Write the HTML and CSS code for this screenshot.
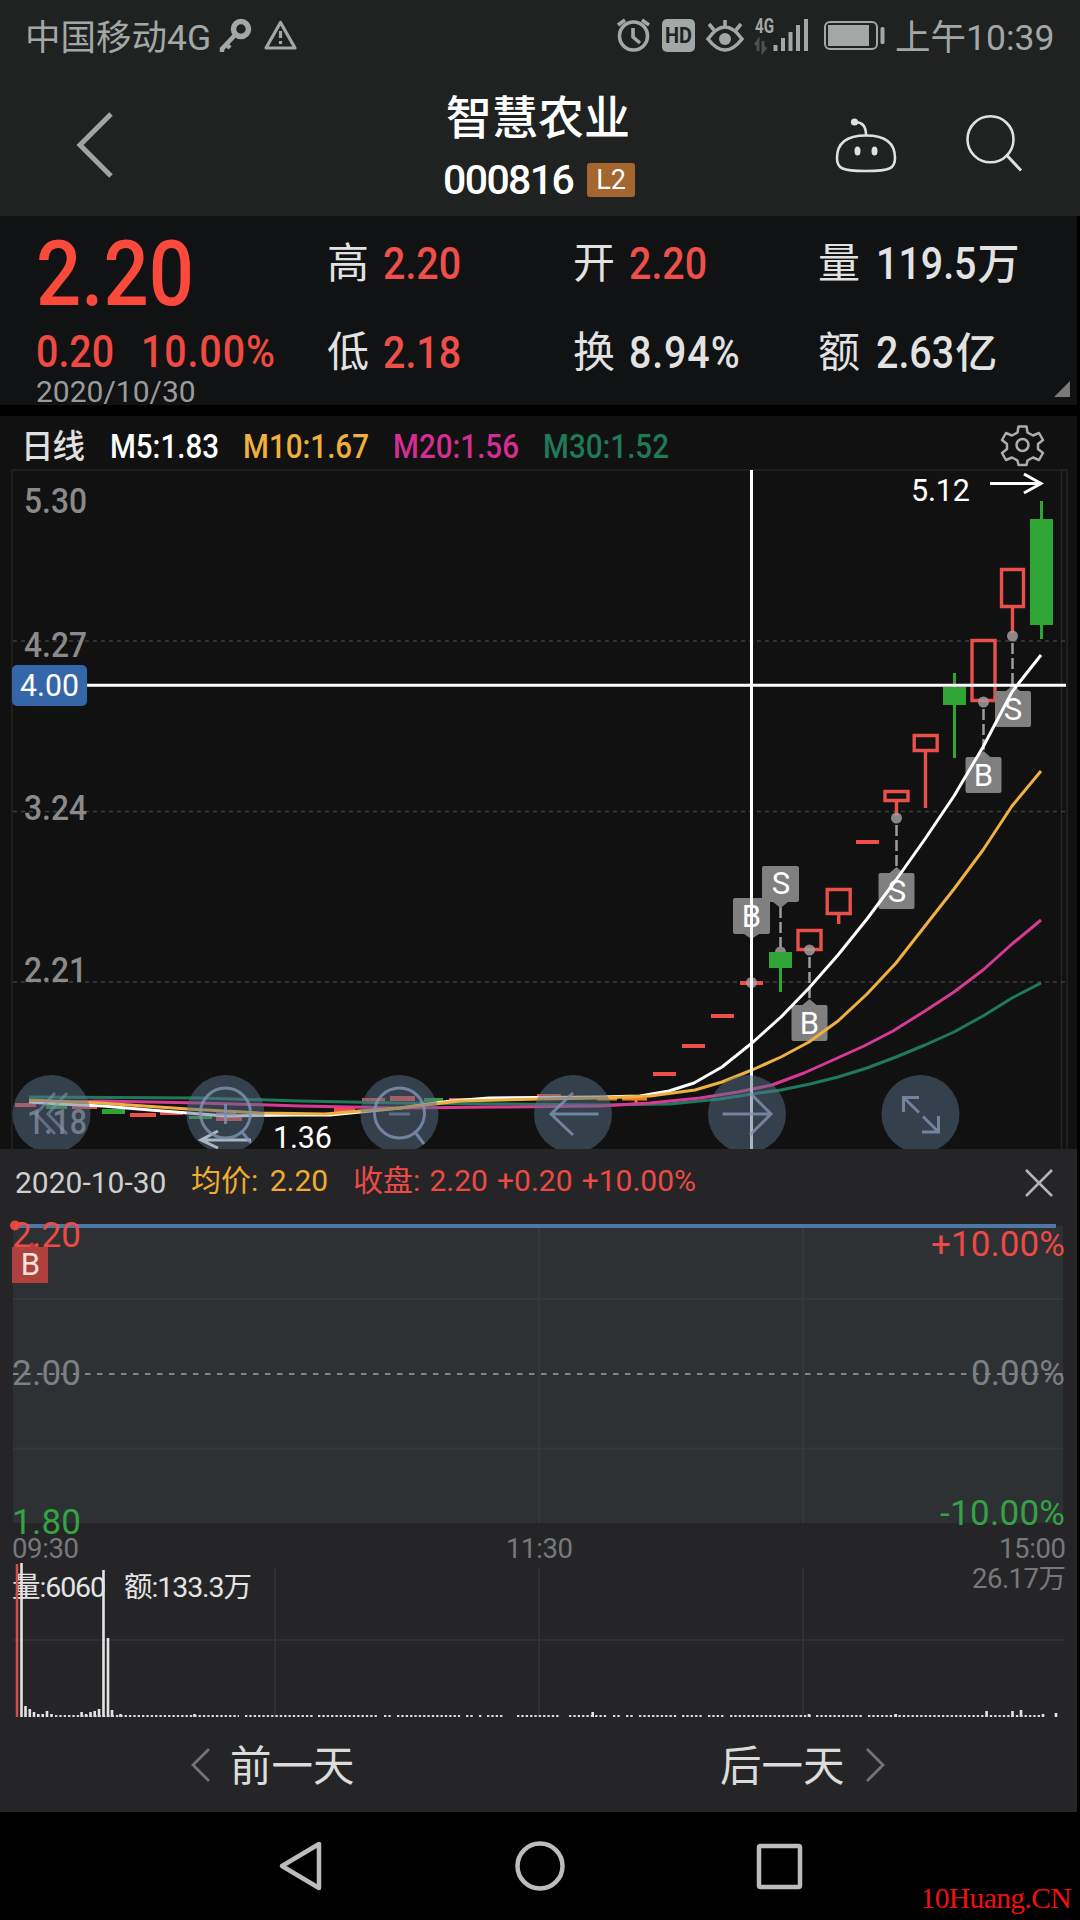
FILE: index.html
```html
<!DOCTYPE html>
<html lang="zh-CN">
  <head>
    <meta charset="UTF-8" />
    <meta name="viewport" content="width=device-width, initial-scale=1.0" />
    <title>智慧农业 000816</title>
    <link rel="stylesheet" href="styles.css">
  </head>
  <body>
    <div class="top">
      <div class="status-bar">
        <span class="carrier">中国移动4G</span>
        <svg class="status-left" width="80" height="40" viewBox="218 18 80 40">
          <circle cx="241" cy="30" r="7.5" fill="none" stroke="#a3a8a6" stroke-width="5.5"/>
          <path d="M235 36L222 50V53M227 46L230 49" fill="none" stroke="#a3a8a6" stroke-width="4.5"/>
          <path d="M280.5 23.500L295 49H266Z" fill="none" stroke="#a3a8a6" stroke-width="3.200" stroke-linejoin="round"/>
          <path d="M280.500 32v7M280.500 42v3" stroke="#a3a8a6" stroke-width="3.200"/>
        </svg>
        <svg class="status-icons" width="275" height="40" viewBox="612 18 275 40">
          <g fill="none" stroke="#a3a8a6" stroke-width="3.600">
            <circle cx="633.500" cy="37" r="14"/>
            <path d="M633 29v9l7 6M618 26l7-5M642 21l7 5"/>
            <path d="M708 40Q725 16 742 40Q725 62 708 40ZM725 28v-7M714 31l-5-6M736 31l5-6"/>
          </g>
          <circle cx="725" cy="40" r="6" fill="#a3a8a6"/>
          <rect x="662" y="20" width="33" height="33" rx="5" fill="#a3a8a6"/>
          <text x="665" y="44" class="hd" textLength="27" lengthAdjust="spacingAndGlyphs">HD</text>
          <text x="755" y="34" class="net" textLength="19" lengthAdjust="spacingAndGlyphs">4G</text>
          <path d="M758 52V42l-3 4M763 42v10l3-4" fill="none" stroke="#4c5150" stroke-width="3"/>
          <path d="M775.500 46v6M783 39v13M790.500 33v19M798 26v26M806 20v32" stroke="#a3a8a6" stroke-width="4"/>
          <rect x="825" y="23" width="52" height="27" rx="5" fill="none" stroke="#a3a8a6" stroke-width="2"/>
          <rect x="828" y="26" width="41" height="21" fill="#a3a8a6"/>
          <rect x="880.500" y="28" width="4" height="17" rx="1.500" fill="#a3a8a6"/>
        </svg>
        <span class="clock">上午10:39</span>
      </div>

      <header class="title-bar">
        <svg class="back" width="40" height="70" viewBox="0 0 40 70"><path d="M36 4L5 35l31 31" fill="none" stroke="#a2a4a3" stroke-width="5"/></svg>
        <div class="stock">
          <h1>智慧农业</h1>
          <div class="code"><span>000816</span><em>L2</em></div>
        </div>
        <svg class="tools" width="200" height="70" viewBox="830 110 200 70">
          <g fill="none" stroke="#dfe1e0" stroke-width="2.600">
            <path d="M837 158C837 142 848 135.500 866 135.500S895 142 895 158C895 168 891 171 866 171S837 168 837 158Z"/>
            <path d="M855 122Q866 122 866 135"/>
            <circle cx="990.500" cy="139.300" r="23"/>
            <path d="M1006 154.500l15 16" stroke-width="3"/>
          </g>
          <g fill="#dfe1e0">
            <circle cx="854.500" cy="122" r="3.600"/>
            <ellipse cx="857.500" cy="151" rx="3" ry="4.500"/>
            <ellipse cx="874.500" cy="151" rx="3" ry="4.500"/>
          </g>
        </svg>
      </header>
    </div>

    <section class="quote">
      <div class="last">
        <div class="price"><span class="num">2.20</span></div>
        <div class="change"><span class="num">0.20</span><span class="num long">10.00%</span></div>
        <div class="date">2020/10/30</div>
      </div>
      <dl class="stats">
        <div><dt>高</dt><dd class="num up">2.20</dd></div>
        <div><dt>开</dt><dd class="num up">2.20</dd></div>
        <div><dt>量</dt><dd><span class="num wide">119.5</span>万</dd></div>
        <div><dt>低</dt><dd class="num up">2.18</dd></div>
        <div><dt>换</dt><dd class="num long">8.94%</dd></div>
        <div><dt>额</dt><dd><span class="num wide short">2.63</span>亿</dd></div>
      </dl>
      <i class="corner"></i>
    </section>

    <!-- daily candles -->
    <section class="kline">
      <svg width="1080" height="733" viewBox="0 416 1080 733">
        <g class="ma">
          <text x="21" y="458" fill="#e0e0e0" textLength="64">日线</text>
          <text x="110" y="458" fill="#fff" textLength="109" lengthAdjust="spacingAndGlyphs">M5:1.83</text>
          <text x="243" y="458" fill="#efb03c" textLength="126" lengthAdjust="spacingAndGlyphs">M10:1.67</text>
          <text x="393" y="458" fill="#d32f93" textLength="126" lengthAdjust="spacingAndGlyphs">M20:1.56</text>
          <text x="543" y="458" fill="#1f7a58" textLength="126" lengthAdjust="spacingAndGlyphs">M30:1.52</text>
        </g>
        <g fill="none" stroke="#adadad" stroke-width="2.500" stroke-linejoin="round">
          <circle cx="1022.500" cy="445" r="6"/>
          <path d="M1018.500 426.500h8l1 6 5.500 3 6-2.500 4 7-5 4v5l5 4-4 7-6-2.500-5.500 3-1 4.500h-8l-1-4.500-5.500-3-6 2.500-4-7 5-4v-5l-5-4 4-7 6 2.500 5.500-3Z"/>
        </g>

        <path d="M12 1149V470H1067V1149M1061.500 470V1149" fill="none" stroke="#252525" stroke-width="1.500"/>
        <path d="M13 641H1066M13 811.500H1066M13 982H1066" stroke="#3e3e3e" stroke-width="1.500" stroke-dasharray="4 4"/>

        <g class="axis">
          <text x="24" y="513" textLength="63" lengthAdjust="spacingAndGlyphs">5.30</text>
          <text x="24" y="657" textLength="63" lengthAdjust="spacingAndGlyphs">4.27</text>
          <text x="24" y="820" textLength="63" lengthAdjust="spacingAndGlyphs">3.24</text>
          <text x="24" y="982" textLength="63" lengthAdjust="spacingAndGlyphs">2.21</text>
          <text x="27" y="1134" textLength="60" lengthAdjust="spacingAndGlyphs">1.18</text>
        </g>

        <g fill="#ee4f49">
          <path d="M15 1103h21v4h-21zM72 1105h25v4h-25zM130 1113h26v4h-26zM160 1111h23v4h-23zM216 1117h26v4h-26zM334 1108h21v4h-21zM362 1098h23v3h-23zM390 1096h25v5h-25zM449 1098h24v3h-24zM537 1094h24v3h-24z"/>
          <path d="M653 1072h23v4h-23zM682 1044h23v4h-23zM711 1014h23v4h-23zM740 981h23v4h-23zM856 840h23v4h-23z"/>
        </g>
        <path d="M46 1105h21v4h-21zM102 1109h23v5h-23zM189 1116h23v3h-23zM424 1098h19v4h-19z" fill="#2fa535"/>
        <path d="M597 1099h20M622 1099h25M636 1099v4" stroke="#f08028" stroke-width="3"/>

        <g fill="none" stroke="#e8504a" stroke-width="3.400">
          <path d="M798 930.500h23v19h-23zM827.200 889.500h23v24h-23zM838.700 914v10M885 791.500h23v9h-23zM896.500 802v14M914.200 735.500h23v15h-23zM925.500 752v56M972 640.500h23v60h-23zM1001.500 569.500h22v37h-22zM1012.500 608v25"/>
        </g>
        <g fill="#2fa535">
          <path d="M769 952h23v16h-23zM779 968h3v24h-3zM943 687h23v18h-23zM953 673h3v85h-3zM1030 519h23v106h-23zM1040 501h3v138h-3z"/>
        </g>

        <!-- trade markers -->
        <g fill="#a39a9c" opacity=".85">
          <circle cx="751.500" cy="982.500" r="5.500"/>
          <path d="M775 952a5.500 5.500 0 0 1 11 0z"/>
          <circle cx="809.500" cy="950" r="5.500"/>
          <circle cx="896.500" cy="818" r="5.500"/>
          <circle cx="983.500" cy="702" r="5.500"/>
          <circle cx="1012.500" cy="636" r="5.500"/>
        </g>
        <path d="M780.500 907v40M809.500 957v43M896.500 825v42M983.500 709v41M1012.500 643v42" stroke="#9d9d9d" stroke-width="2.500" stroke-dasharray="11 4"/>
        <g fill="#808080">
          <path d="M735 898h33q2 0 2 2v32q0 2-2 2h-9l-7.500 5-7.500-5h-9q-2 0-2-2v-32q0-2 2-2z"/>
          <path d="M764 866h33q2 0 2 2v32q0 2-2 2h-9l-7.500 6-7.500-6h-9q-2 0-2-2v-32q0-2 2-2z"/>
          <path d="M793.500 1005h9l7-6 7 6h9q2 0 2 2v32q0 2-2 2h-32q-2 0-2-2v-32q0-2 2-2z"/>
          <path d="M880.500 873h9l7-6 7 6h9q2 0 2 2v32q0 2-2 2h-32q-2 0-2-2v-32q0-2 2-2z"/>
          <path d="M967.500 757h9l7-6 7 6h9q2 0 2 2v32q0 2-2 2h-32q-2 0-2-2v-32q0-2 2-2z"/>
          <path d="M997 691h9l7-6 7 6h9q2 0 2 2v32q0 2-2 2h-32q-2 0-2-2v-32q0-2 2-2z"/>
        </g>
        <g class="flag">
          <text x="751.500" y="927">B</text>
          <text x="781" y="894">S</text>
          <text x="809.500" y="1034">B</text>
          <text x="897" y="902">S</text>
          <text x="983.500" y="786">B</text>
          <text x="1013" y="720">S</text>
        </g>

        <!-- moving averages -->
        <g fill="none" stroke-width="3" stroke-linejoin="round">
          <path stroke="#1f7a5c" d="M29 1097L200 1098 300 1101 400 1103 500 1104 600 1105 670 1104 720 1099 752 1094 781 1090 810 1084 838 1077 867 1068 896 1057 925 1045 954 1032 983 1016 1012 998 1041 983"/>
          <path stroke="#d63a93" d="M29 1103L100 1101 200 1103 300 1106 400 1108 500 1107 600 1106 650 1103 700 1098 738 1092 772 1085 804 1073 833 1060 864 1046 893 1031 925 1011 954 992 983 970 1012 944 1041 920"/>
          <path stroke="#fff" d="M29 1102L60 1104 103 1106 150 1110 188 1113 225 1116 293 1115 330 1115 400 1108 451 1101 489 1098 600 1097 640 1096 669 1091 694 1083 722 1067 752 1043 781 1017 809 988 838 955 867 919 896 880 925 839 954 796 983 747 1012 692 1022 679 1041 655"/>
          <path stroke="#f0b040" d="M29 1100L100 1103 188 1109 260 1113 325 1114 360 1111 400 1108 460 1101 540 1099 600 1098 650 1096 695 1090 722 1082 752 1070 781 1057 809 1042 838 1021 867 994 896 963 925 926 954 889 983 850 1012 806 1041 771"/>
        </g>

        <path d="M751.500 470V1149M87 685.300H1066" stroke="#fff" stroke-width="3"/>
        <rect x="12" y="665" width="75" height="41" rx="5" fill="#3567a8"/>
        <text class="cursor" x="20" y="696" textLength="59" lengthAdjust="spacingAndGlyphs">4.00</text>

        <g class="extreme">
          <text x="911" y="501" textLength="59">5.12</text>
          <text x="273" y="1148" textLength="59">1.36</text>
        </g>
        <path d="M990 483.500H1041M1024 474L1041 483.500 1024 493M251 1140H202M218 1131L201 1140 218 1148" fill="none" stroke="#fff" stroke-width="3"/>

        <!-- floating controls -->
        <g fill="#5a7088" opacity=".5">
          <circle cx="51.500" cy="1114" r="39"/>
          <circle cx="225.500" cy="1114" r="39"/>
          <circle cx="399.500" cy="1114" r="39"/>
          <circle cx="573" cy="1114" r="39"/>
          <circle cx="747" cy="1114" r="39"/>
          <circle cx="920.500" cy="1114" r="39"/>
        </g>
        <g fill="none" stroke="#8294b4" stroke-width="3" opacity=".8">
          <path d="M55 1093L36 1114 55 1134M67 1093L48 1114 67 1134" opacity=".7"/>
          <circle cx="225.500" cy="1113" r="25"/>
          <path d="M225.500 1104v20M216 1114h20M242 1132l9 11"/>
          <circle cx="399.500" cy="1113" r="25"/>
          <path d="M415 1132l9 12"/>
          <path d="M389 1114h21" opacity=".7"/>
          <path d="M598.500 1114H551M573 1093L551 1114 573 1135"/>
          <path d="M722.500 1114H771M750 1093L771 1114 750 1135"/>
          <path d="M919 1097.500H903.500V1112M903.500 1097.500L919 1112.500M922 1132H938.500V1116M938.500 1132L923 1116.500"/>
        </g>
      </svg>
    </section>

    <!-- intraday panel -->
    <section class="intraday">
      <div class="info">
        <span class="day">2020-10-30</span>
        <span class="avg">均价: 2.20</span>
        <span class="close">收盘: 2.20 +0.20 +10.00%</span>
        <svg width="28" height="28" viewBox="0 0 28 28"><path d="M1 1l26 26M27 1L1 27" stroke="#b5b5b5" stroke-width="2.500"/></svg>
      </div>
      <svg class="minute" width="1080" height="506" viewBox="0 1216 1080 506">
        <rect x="13" y="1226" width="1050" height="297" fill="#2e3134"/>
        <path d="M13 1299H1063M13 1448.500H1063M539 1228V1523M803 1228V1523" stroke="#35383b" stroke-width="2"/>
        <path d="M13 1640H1064M275 1568V1717M539 1568V1717M803 1568V1717" stroke="#303034" stroke-width="2"/>
        <path d="M13 1374H1063" stroke="#a0a0a0" stroke-width="1.600" stroke-dasharray="5.500 6.500"/>
        <path d="M16 1226H1056" stroke="#4f77a6" stroke-width="4"/>
        <circle cx="15" cy="1225.500" r="5" fill="#e8443e"/>
        <path d="M12 1247h15l5-5 5 5h11v36H12z" fill="#b0403e"/>
        <text x="30.500" y="1275" class="buy">B</text>
        <g class="scale">
          <text x="12" y="1247" fill="#ec4a45" textLength="69">2.20</text>
          <text x="1065" y="1256" fill="#ec4a45" text-anchor="end" textLength="134">+10.00%</text>
          <text x="12" y="1385" fill="#7d7f84" textLength="69">2.00</text>
          <text x="1065" y="1385" fill="#7d7f84" text-anchor="end" textLength="94">0.00%</text>
          <text x="12" y="1534" fill="#33a344" textLength="69">1.80</text>
          <text x="1065" y="1525" fill="#33a344" text-anchor="end" textLength="125">-10.00%</text>
        </g>
        <g class="time">
          <text x="12" y="1558" textLength="67">09:30</text>
          <text x="506" y="1558" textLength="67">11:30</text>
          <text x="1066" y="1558" text-anchor="end" textLength="67">15:00</text>
          <text x="1066" y="1588" text-anchor="end" textLength="94">26.17万</text>
        </g>
        <g class="volume">
          <text x="12" y="1597" textLength="94">量:6060</text>
          <text x="124" y="1597" textLength="128">额:133.3万</text>
        </g>
        <path d="M17 1717V1564" stroke="#d0504c" stroke-width="2.500"/>
        <g stroke="#e4e4e4" stroke-width="2.600">
          <path d="M21.500 1717V1563M103.500 1717V1570M108 1717V1638"/>
          <path d="M25.500 1717v-11M29.800 1717v-8M34 1717v-5M38.300 1717v-3M42.700 1717v-3M47 1717v-6M51.500 1717v-3M81.600 1717v-5M86 1717v-3M90.500 1717v-5M94.700 1717v-6M99 1717v-8M112 1717v-7M120.500 1717v-3M194.500 1717v-3"/>
          <path d="M592.700 1717v-5M809 1717v-3M895.700 1717v-3M986.600 1717v-6M1012.500 1717v-6M1021 1717v-7M1043 1717v-3M1056 1717v-4"/>
        </g>
        <path d="M55 1716H239M245 1716H313M318 1716H378M384 1716H391M397 1716H460M466 1716H473M479 1716H482M487 1716H503M517 1716H560M569 1716H608M613 1716H620M626 1716H634M639 1716H677M682 1716H703M708 1716H725M730 1716H811M816 1716H863M868 1716H1043" stroke="#dcdcdc" stroke-width="2" stroke-dasharray="2.350 2"/>
      </svg>
      <div class="pager">
        <a class="prev"><svg width="20" height="36" viewBox="0 0 20 36"><path d="M18 2L2 18l16 16" fill="none" stroke="#747476" stroke-width="2.800"/></svg><span>前一天</span></a>
        <a class="next"><span>后一天</span><svg width="20" height="36" viewBox="0 0 20 36"><path d="M2 2l16 16L2 34" fill="none" stroke="#747476" stroke-width="2.800"/></svg></a>
      </div>
    </section>

    <nav class="system-nav">
      <svg width="48" height="54" viewBox="0 0 48 54"><path d="M42 5v44L5 27Z" fill="none" stroke="#bcbcbc" stroke-width="4.500" stroke-linejoin="round"/></svg>
      <svg width="52" height="52" viewBox="0 0 52 52"><circle cx="26" cy="26" r="22.500" fill="none" stroke="#bcbcbc" stroke-width="4.500"/></svg>
      <svg width="48" height="48" viewBox="0 0 48 48"><rect x="4" y="4" width="41" height="41" rx="1.500" fill="none" stroke="#bcbcbc" stroke-width="4.500"/></svg>
      <span class="watermark">10Huang.CN</span>
    </nav>
  </body>
</html>
```
FILE: styles.css
```css
* {
  box-sizing: border-box;
}

body {
  margin: 0;
  width: 1080px;
  height: 1920px;
  overflow: hidden;
  display: flex;
  flex-direction: column;
  background: #000;
  color: #e2e2e2;
  font-family: Roboto, "Noto Sans CJK SC", sans-serif;
}

svg {
  display: block;
  flex: none;
}

.top {
  height: 216px;
  background: #1f2221;
}

.status-bar {
  height: 74px;
  padding: 0 24px 0 25px;
  display: flex;
  align-items: center;
  color: #a3a8a6;
  font-size: 35.5px;
}

.carrier {
  width: 193px;
  margin-top: -6px;
  white-space: nowrap;
}

.status-icons {
  margin-left: 314px;
  overflow: visible;
}

.clock {
  margin: -6px 0 0 8px;
  white-space: nowrap;
}

.hd {
  font-size: 22px;
  font-weight: 700;
  fill: #1f2221;
}

.net {
  font-size: 20px;
  font-weight: 700;
  fill: #a3a8a6;
}

.title-bar {
  height: 142px;
  padding: 0 50px 0 75px;
  display: flex;
  align-items: center;
}

.stock {
  width: 200px;
  margin-left: 327px;
  height: 142px;
  color: #fff;
}

.stock h1 {
  margin: 15px 0 0 4px;
  font-size: 46px;
  font-weight: 500;
  line-height: 58px;
  white-space: nowrap;
}

.code {
  display: flex;
  align-items: center;
  margin: 16px 0 0 1px;
  line-height: 34px;
}

.code span {
  width: 144px;
  font-size: 41px;
  font-weight: 500;
  letter-spacing: -1.6px;
}

.code em {
  width: 48px;
  height: 34px;
  border-radius: 3px;
  background: #a4662f;
  font-size: 27px;
  font-style: normal;
  text-align: center;
}

.tools {
  margin-left: auto;
}

/* quote */
.num {
  display: inline-block;
  transform: scaleX(0.885);
  transform-origin: 0 50%;
  font-weight: 500;
}

.num.long {
  letter-spacing: 1px;
}

.quote {
  position: relative;
  height: 189px;
  width: 1077px;
  display: flex;
  background: #111213;
}

.last {
  width: 327px;
  padding: 15px 0 0 36px;
  color: #ee4a42;
}

.price {
  height: 87px;
  font-size: 90px;
  line-height: 87px;
  color: #fb4a3b;
}

.change {
  display: flex;
  height: 66px;
  padding-top: 6px;
  font-size: 44.5px;
  line-height: 56px;
}

.change .num:first-child {
  width: 105px;
}

.date {
  margin-top: -7px;
  font-size: 30px;
  line-height: 30px;
  color: #9b9b9b;
}

.stats {
  margin: 0;
  padding-top: 20px;
  display: grid;
  grid-template-columns: 246px 245px 259px;
  grid-template-rows: 89px 89px;
}

.stats div {
  display: flex;
  align-items: flex-start;
  height: 56px;
  line-height: 56px;
}

.stats dt {
  width: 56px;
  font-size: 42px;
}

.stats dd {
  margin: 0;
  font-size: 44.5px;
  white-space: nowrap;
}

.stats dd:not(.num) {
  padding-left: 2px;
  font-size: 42px;
  font-weight: 500;
}

.stats .wide {
  font-size: 44.5px;
  margin-right: -12px;
}

.stats .short {
  margin-right: -9px;
}

.up {
  color: #ee4f49;
}

.corner {
  position: absolute;
  right: 7px;
  bottom: 8px;
  border: 8.5px solid transparent;
  border-right-color: #7a7a7a;
  border-bottom-color: #7a7a7a;
}

/* daily chart */
.kline {
  margin-top: 11px;
  width: 1077px;
  height: 733px;
  overflow: hidden;
  background: #111112;
}

.ma {
  font-size: 32.5px;
  font-weight: 500;
}

.axis {
  font-size: 35px;
  font-weight: 500;
  fill: #8a8a8a;
}

.cursor {
  font-size: 31px;
  fill: #fff;
}

.extreme {
  font-size: 30.5px;
  fill: #fff;
}

.flag {
  font-size: 31px;
  fill: #fff;
  text-anchor: middle;
}

/* intraday */
.intraday {
  width: 1077px;
  height: 663px;
  background: #252528;
}

.info {
  height: 67px;
  padding: 0 24px 0 15px;
  display: flex;
  align-items: center;
  font-size: 30px;
  line-height: 36px;
  white-space: nowrap;
}

.day {
  width: 176px;
  color: #cfcfcf;
}

.avg {
  width: 162px;
  margin-top: -4px;
  word-spacing: 4px;
  color: #efac2f;
}

.close {
  flex: 1;
  margin-top: -4px;
  word-spacing: 1.7px;
  color: #ec4a45;
}

.minute {
  width: 1080px;
}

.scale {
  font-size: 35px;
}

.time {
  font-size: 27.5px;
  fill: #78787b;
}

.volume {
  font-size: 28.5px;
  fill: #e4e4e4;
}

.buy {
  font-size: 31px;
  fill: #fbe0dc;
  text-anchor: middle;
}

.pager {
  height: 86px;
  display: flex;
  color: #dcdcdc;
  font-size: 41.5px;
}

.pager a {
  display: flex;
  align-items: center;
}

.pager span {
  margin-top: -5px;
}

.prev {
  width: 720px;
  padding-left: 191px;
  gap: 19px;
}

.next {
  gap: 20px;
}

/* android keys */
.system-nav {
  position: relative;
  flex: 1;
  display: flex;
  align-items: center;
  padding-left: 277px;
  gap: 189px;
}

.watermark {
  position: absolute;
  right: 9px;
  bottom: 5px;
  font-family: "Liberation Serif", serif;
  font-size: 29.5px;
  letter-spacing: -0.6px;
  color: #f01010;
}
```
